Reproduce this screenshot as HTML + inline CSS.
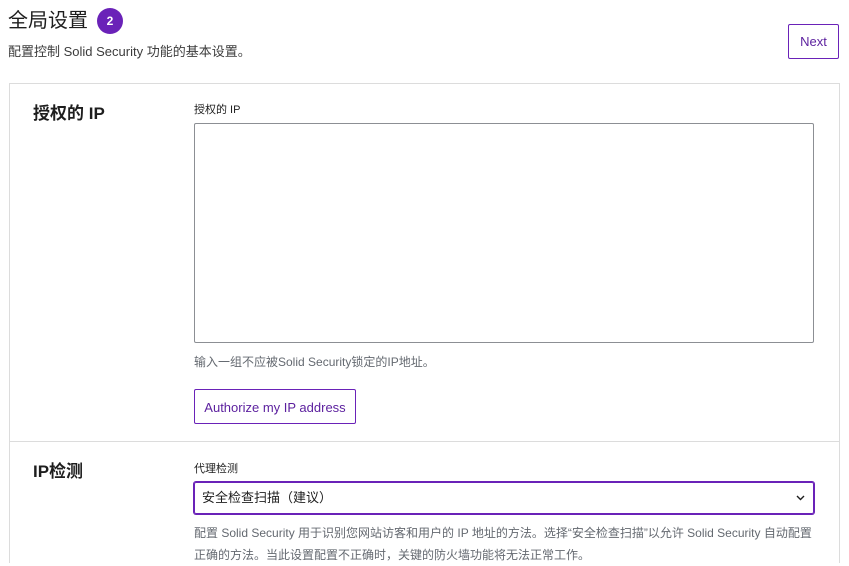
<!DOCTYPE html>
<html><head><meta charset="utf-8"><style>
*{box-sizing:border-box;margin:0;padding:0}
body{width:849px;height:549px;overflow:hidden;background:#fff;font-family:"Liberation Sans","Noto Sans CJK SC",sans-serif;color:#1e1e1e;position:relative}
.a{position:absolute}
</style></head><body>
<div class="a" style="left:8px;top:7px;font-size:20px;line-height:28px;color:#1e1e1e">全局设置</div>
<div class="a" style="left:97px;top:8px;width:26px;height:26px;border-radius:50%;background:#6a22b8;color:#fff;font-size:12px;font-weight:bold;text-align:center;line-height:26px">2</div>
<div class="a" style="left:8px;top:41px;font-size:13px;color:#3c3c3c">配置控制 Solid Security 功能的基本设置。</div>
<div class="a" style="left:788px;top:24px;width:51px;height:35px;border:1px solid #6a22b8;border-radius:2px;color:#5b1f9e;font-size:13px;text-align:center;line-height:33px">Next</div>
<div class="a" style="left:9px;top:83px;width:831px;height:480px;border:1px solid #dcdcdc;border-bottom:none"></div>
<div class="a" style="left:10px;top:441px;width:829px;height:1px;background:#dcdcdc"></div>
<div class="a" style="left:33px;top:99px;font-size:17px;font-weight:bold">授权的 IP</div>
<div class="a" style="left:194px;top:101px;font-size:11px">授权的 IP</div>
<div class="a" style="left:194px;top:123px;width:620px;height:220px;border:1px solid #8c8f94;border-radius:2px"></div>
<div class="a" style="left:194px;top:353px;font-size:12px;color:#646970">输入一组不应被Solid Security锁定的IP地址。</div>
<div class="a" style="left:194px;top:389px;width:162px;height:35px;border:1px solid #6a22b8;border-radius:2px;color:#5b1f9e;font-size:13px;text-align:center;line-height:36px">Authorize my IP address</div>
<div class="a" style="left:33px;top:457px;font-size:17px;font-weight:bold">IP检测</div>
<div class="a" style="left:194px;top:460px;font-size:11px">代理检测</div>
<div class="a" style="left:194px;top:482px;width:620px;height:32px;border:1px solid #6a22b8;box-shadow:0 0 0 1px #6a22b8;border-radius:2px;font-size:13px;line-height:30px;padding-left:7px">安全检查扫描（建议）<svg style="position:absolute;right:8px;top:12px" width="9" height="6" viewBox="0 0 9 6"><path d="M1 1l3.5 3.5L8 1" fill="none" stroke="#1e1e1e" stroke-width="1.4"/></svg></div>
<div class="a" style="left:194px;top:522px;width:625px;font-size:12px;line-height:22px;color:#646970">配置 Solid Security 用于识别您网站访客和用户的 IP 地址的方法。选择“安全检查扫描”以允许 Solid Security 自动配置正确的方法。当此设置配置不正确时，关键的防火墙功能将无法正常工作。</div>
</body></html>
